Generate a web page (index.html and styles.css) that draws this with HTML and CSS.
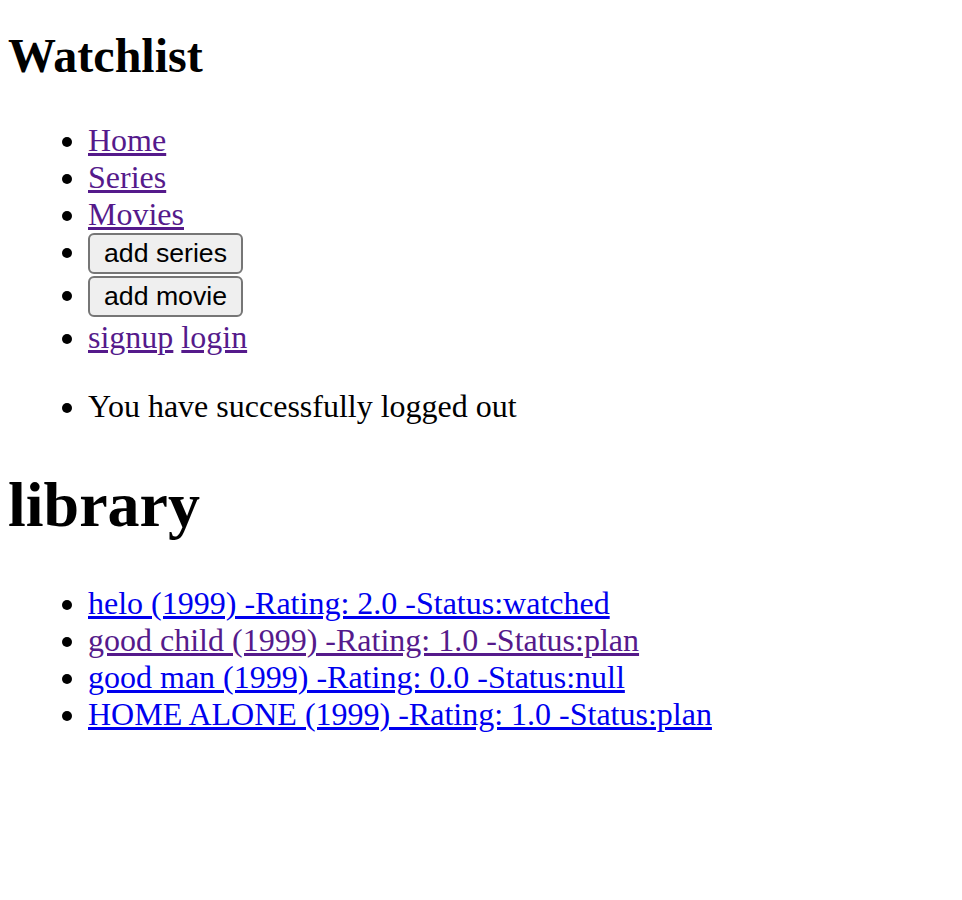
FILE: index.html
```html
<!DOCTYPE html>
<html lang="en">
<head>
<meta charset="utf-8">
<title>Watchlist</title>
<link rel="stylesheet" href="styles.css">
</head>
<body>
<header class="site-header">
  <h2 class="site-title">Watchlist</h2>
  <ul class="nav-list">
    <li><a class="visited" href="#">Home</a></li>
    <li><a class="visited" href="#">Series</a></li>
    <li><a class="visited" href="#">Movies</a></li>
    <li><button class="nav-btn" type="button">add series</button></li>
    <li><button class="nav-btn" type="button">add movie</button></li>
    <li><a class="visited" href="#">signup</a> <a class="visited" href="#">login</a></li>
  </ul>
</header>
<ul class="messages">
  <li>You have successfully logged out</li>
</ul>
<main>
  <h1 class="page-title">library</h1>
  <ul class="library-list">
    <li><a href="#">helo (1999) -Rating: 2.0 -Status:watched</a></li>
    <li><a class="visited" href="#">good child (1999) -Rating: 1.0 -Status:plan</a></li>
    <li><a href="#">good man (1999) -Rating: 0.0 -Status:null</a></li>
    <li><a href="#">HOME ALONE (1999) -Rating: 1.0 -Status:plan</a></li>
  </ul>
</main>
</body>
</html>
```
FILE: styles.css
```css
html {
  background: #ffffff;
}

body {
  margin: 8px;
  font-family: "Liberation Serif", "Times New Roman", serif;
  font-size: 32px;
  color: #000000;
}

a {
  color: #0000ee;
  text-decoration: underline;
}

a.visited {
  color: #551a8b;
}

.site-title {
  font-size: 48px;
  font-weight: bold;
  margin: 20px 0 39px;
}

ul {
  margin: 32px 0;
  padding-left: 80px;
  list-style: disc;
}

.nav-list li {
  line-height: normal;
}

.nav-btn {
  font-family: "Liberation Sans", Arial, sans-serif;
  font-size: 26.67px;
  color: #000000;
  background: #efefef;
  border: 2px solid #767676;
  border-radius: 6px;
  padding: 3px 14px;
  margin: 0 0 2px;
}

.page-title {
  font-size: 64px;
  font-weight: bold;
  margin: 43px 0;
}
```
